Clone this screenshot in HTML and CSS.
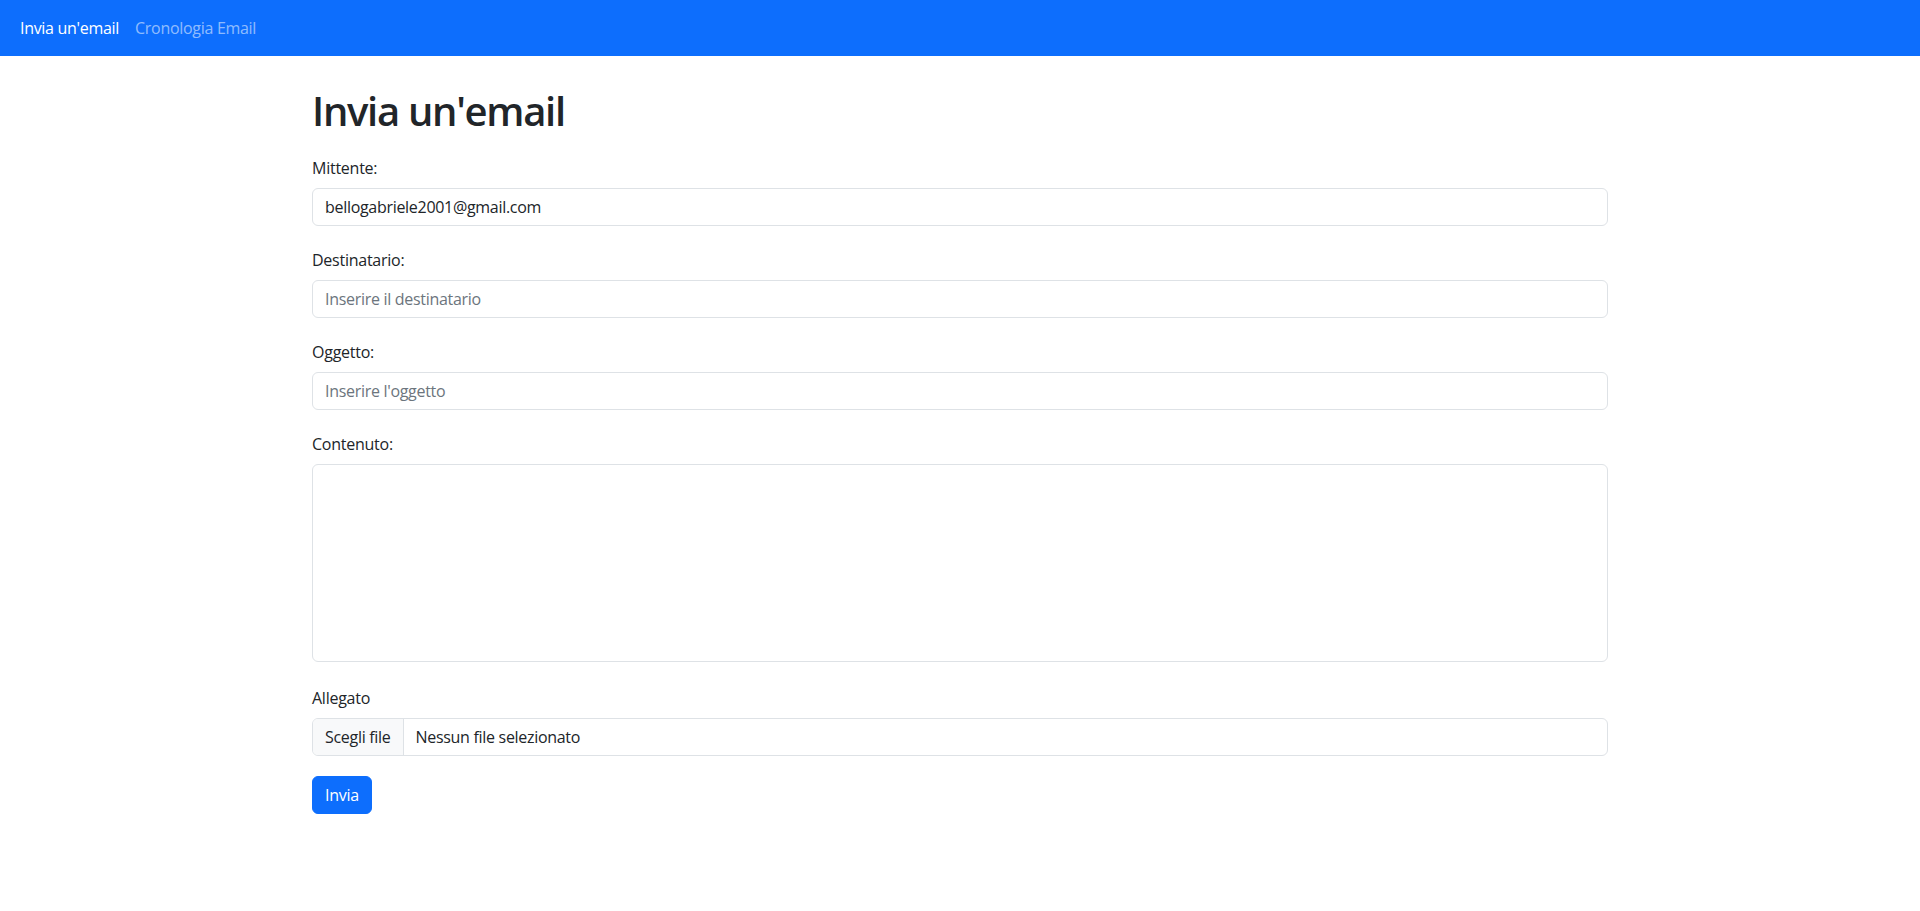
FILE: index.html
```html
<!DOCTYPE html>
<html lang="it">
<head>
<meta charset="utf-8">
<title>Invia un'email</title>
<link rel="stylesheet" href="styles.css">
</head>
<body>
<nav class="navbar">
  <ul class="nav">
    <li><a class="nav-link active" href="#">Invia un'email</a></li>
    <li><a class="nav-link" href="#">Cronologia Email</a></li>
  </ul>
</nav>
<main class="container">
  <h1 class="title">Invia un'email</h1>
  <form class="form">
    <div class="group">
      <label class="label" for="from">Mittente:</label>
      <input class="control" id="from" type="text" value="bellogabriele2001@gmail.com">
    </div>
    <div class="group">
      <label class="label" for="to">Destinatario:</label>
      <input class="control" id="to" type="text" placeholder="Inserire il destinatario">
    </div>
    <div class="group">
      <label class="label" for="subj">Oggetto:</label>
      <input class="control" id="subj" type="text" placeholder="Inserire l'oggetto">
    </div>
    <div class="group group-wide">
      <label class="label" for="body">Contenuto:</label>
      <textarea class="control textarea" id="body"></textarea>
    </div>
    <div class="group group-file">
      <span class="label">Allegato</span>
      <div class="control file">
        <span class="file-btn">Scegli file</span>
        <span class="file-name">Nessun file selezionato</span>
      </div>
    </div>
    <button class="btn" type="button">Invia</button>
  </form>
</main>
</body>
</html>
```

FILE: styles.css
```css
* { box-sizing: border-box; }
html, body { margin: 0; padding: 0; }
body {
  font-family: "Segoe UI", "Open Sans", "Noto Sans", sans-serif;
  font-size: 16px;
  line-height: 1.5;
  color: #212529;
  background: #fff;
}
.navbar {
  background: #0d6efd;
  padding: 8px 12px;
  display: flex;
  align-items: center;
}
.nav {
  list-style: none;
  margin: 0;
  padding: 0;
  display: flex;
}
.nav-link {
  display: block;
  padding: 8px;
  color: rgba(255, 255, 255, 0.55);
  text-decoration: none;
  line-height: 24px;
  letter-spacing: -0.3px;
}
.nav-link.active { color: #fff; }
.container {
  max-width: 1320px;
  margin: 0 auto;
  padding: 31px 12px 0;
}
.title {
  font-size: 40px;
  font-weight: 600;
  line-height: 48px;
  margin: 0 0 21px;
  letter-spacing: -1.3px;
}
.form { margin: 0; }
.group { margin-bottom: 22px; }
.group-file { margin-bottom: 20px; }
.group-wide { margin-bottom: 24px; }
.label {
  display: block;
  line-height: 24px;
  margin-bottom: 8px;
  letter-spacing: -0.25px;
}
.control {
  display: block;
  width: 100%;
  height: 38px;
  padding: 6px 12px;
  font: inherit;
  font-size: 16px;
  line-height: 24px;
  color: #212529;
  background: #fff;
  border: 1px solid #dee2e6;
  border-radius: 6px;
  letter-spacing: -0.3px;
  outline: none;
}
.control::placeholder { color: #6c757d; opacity: 1; }
.textarea {
  height: 198px;
  resize: none;
}
.file {
  display: flex;
  padding: 0;
  overflow: hidden;
}
.file-btn {
  padding: 6px 12px;
  background: #f8f9fa;
  border-right: 1px solid #dee2e6;
}
.file-name { padding: 6px 12px; }
.btn {
  display: inline-block;
  height: 38px;
  padding: 6px 12px;
  font: inherit;
  line-height: 24px;
  color: #fff;
  background: #0d6efd;
  border: 1px solid #0d6efd;
  border-radius: 6px;
  letter-spacing: -0.25px;
  cursor: pointer;
}
```
